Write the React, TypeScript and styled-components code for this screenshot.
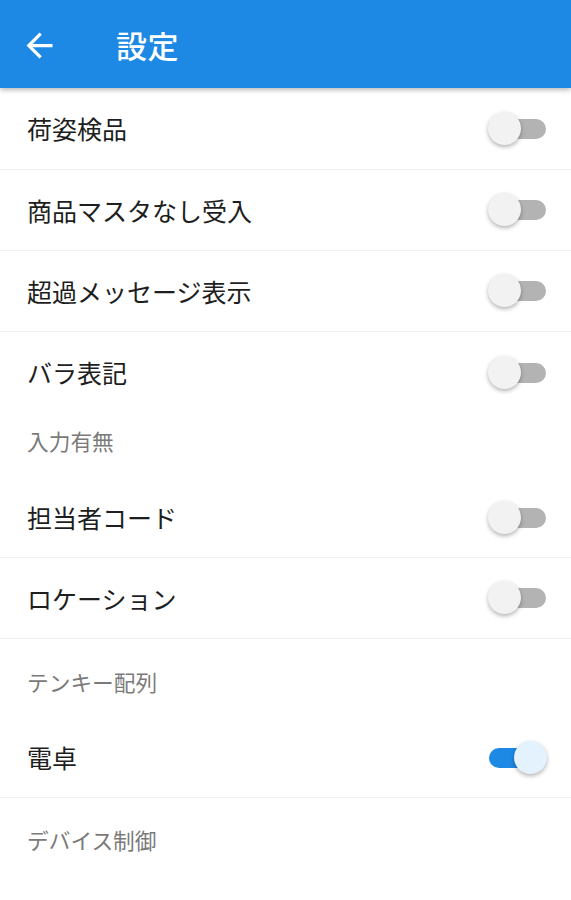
import styled, { createGlobalStyle } from "styled-components";

const GlobalStyle = createGlobalStyle`
  html, body {
    margin: 0;
    padding: 0;
    background: #ffffff;
  }
  body {
    font-family: "Noto Sans CJK JP", "Noto Sans", Roboto, sans-serif;
  }
`;

const Page = styled.div`
  width: 571px;
  height: 900px;
  background: #ffffff;
  overflow: hidden;
`;

const AppBar = styled.header`
  position: relative;
  z-index: 2;
  height: 88px;
  display: flex;
  align-items: center;
  padding-left: 20px;
  background: #1e88e5;
  box-shadow: 0 2px 5px rgba(0, 0, 0, 0.28);
  color: #ffffff;
`;

const BackButton = styled.div`
  width: 39px;
  height: 39px;
  display: flex;
  align-items: center;
  justify-content: center;
  margin-top: 2px;
`;

const Title = styled.h1`
  margin: 0 0 0 57px;
  font-size: 31px;
  font-weight: 500;
  line-height: 1;
  letter-spacing: 0.5px;
`;

const List = styled.div`
  display: flex;
  flex-direction: column;
`;

const Row = styled.div<{ $h: number; $divider?: boolean }>`
  height: ${(p) => p.$h}px;
  box-sizing: border-box;
  display: flex;
  align-items: center;
  justify-content: space-between;
  padding: 0 25px 0 27px;
  border-bottom: ${(p) => (p.$divider ? "1px solid #f0f0f0" : "none")};
`;

const Label = styled.span`
  font-size: 25px;
  color: #1e1e1e;
  line-height: 1;
`;

const Section = styled.div<{ $h: number; $top: number }>`
  height: ${(p) => p.$h}px;
  box-sizing: border-box;
  padding: ${(p) => p.$top}px 27px 0;
  font-size: 21.7px;
  line-height: 24px;
  color: #7a7a7a;
`;

const Track = styled.div<{ $on?: boolean }>`
  position: relative;
  width: 57px;
  height: 20px;
  border-radius: 10px;
  background: ${(p) => (p.$on ? "#1e88e5" : "#b3b3b3")};
`;

const Thumb = styled.div<{ $on?: boolean }>`
  position: absolute;
  top: -7px;
  left: ${(p) => (p.$on ? "25px" : "-1px")};
  width: 33px;
  height: 33px;
  border-radius: 50%;
  background: ${(p) => (p.$on ? "#e3f2fd" : "#f2f2f2")};
  box-shadow: 0 2px 4px rgba(0, 0, 0, 0.3);
`;

function Toggle({ on }: { on?: boolean }) {
  return (
    <Track $on={on}>
      <Thumb $on={on} />
    </Track>
  );
}

type Item =
  | { kind: "row"; label: string; h: number; divider?: boolean; on?: boolean }
  | { kind: "section"; label: string; h: number; top: number };

const items: Item[] = [
  { kind: "row", label: "荷姿検品", h: 82, divider: true },
  { kind: "row", label: "商品マスタなし受入", h: 81, divider: true },
  { kind: "row", label: "超過メッセージ表示", h: 81, divider: true },
  { kind: "row", label: "バラ表記", h: 81 },
  { kind: "section", label: "入力有無", h: 65, top: 16 },
  { kind: "row", label: "担当者コード", h: 80, divider: true },
  { kind: "row", label: "ロケーション", h: 81, divider: true },
  { kind: "section", label: "テンキー配列", h: 79, top: 31 },
  { kind: "row", label: "電卓", h: 80, divider: true, on: true },
  { kind: "section", label: "デバイス制御", h: 80, top: 30 },
];

export default function App() {
  return (
    <Page>
      <GlobalStyle />
      <AppBar>
        <BackButton>
          <svg width="39" height="39" viewBox="0 0 24 24" fill="#ffffff">
            <path d="M20 11H7.83l5.59-5.59L12 4l-8 8 8 8 1.41-1.41L7.83 13H20v-2z" />
          </svg>
        </BackButton>
        <Title>設定</Title>
      </AppBar>
      <List>
        {items.map((it) =>
          it.kind === "row" ? (
            <Row key={it.label} $h={it.h} $divider={it.divider}>
              <Label>{it.label}</Label>
              <Toggle on={it.on} />
            </Row>
          ) : (
            <Section key={it.label} $h={it.h} $top={it.top}>
              {it.label}
            </Section>
          )
        )}
      </List>
    </Page>
  );
}
